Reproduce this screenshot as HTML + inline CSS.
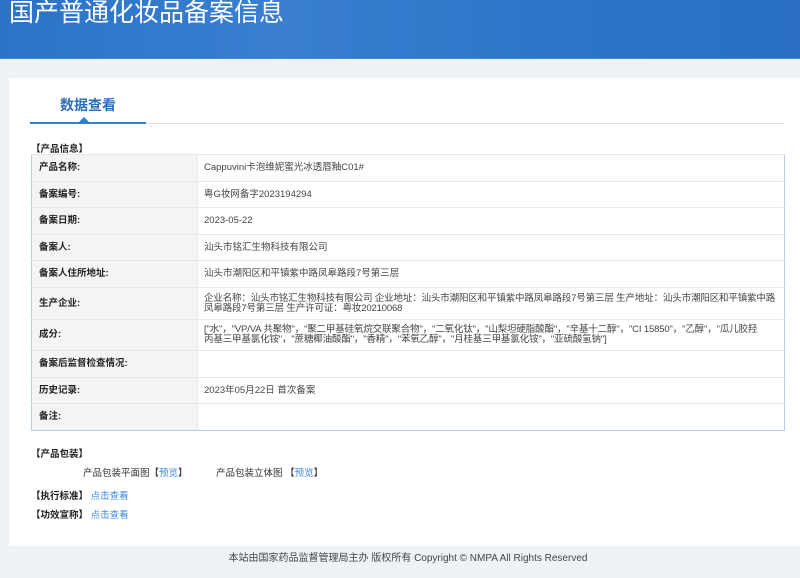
<!DOCTYPE html>
<html><head><meta charset="utf-8"><style>
*{margin:0;padding:0;box-sizing:border-box}
body{width:800px;height:578px;overflow:hidden;background:#eff2f5;font-family:"Liberation Sans","Noto Sans CJK SC",sans-serif;font-size:10px;color:#333;position:relative}
.hd{position:absolute;left:0;top:0;width:800px;height:59px;background:linear-gradient(90deg,#2b73c8 0%,#3a7fd0 35%,#2c74c6 70%,#2a6fc2 100%);border-bottom:1px solid #3b8ad8}
.hd h1{position:absolute;left:9px;top:-7px;font-size:25px;font-weight:normal;color:#fff;letter-spacing:0}
.panel{position:absolute;left:9px;top:78px;width:791px;height:468px;background:#fff}
.tab{position:absolute;left:60px;top:95px;font-size:14px;font-weight:bold;color:#2f6db5}
.line{position:absolute;left:30px;top:123px;width:755px;height:1px;background:#e2e2e2}
.line2{position:absolute;left:30px;top:122px;width:116px;height:2px;background:#2f80d0}
.tri{position:absolute;left:79px;top:117px;width:0;height:0;border-left:5px solid transparent;border-right:5px solid transparent;border-bottom:5px solid #2f80d0}
.b{font-weight:bold;color:#222}
.abs{position:absolute}
table{position:absolute;left:31px;top:154px;width:754px;border-collapse:collapse;border:1px solid #b9cbe6;table-layout:fixed}
td{border-top:1px solid #e8e8e8;vertical-align:middle;font-size:9.5px;line-height:10px}
td.l{width:166px;background:#f4f4f4;font-weight:bold;color:#222;padding-left:7px;border-right:1px solid #e8e8e8}
td.v{padding-left:6px;color:#444;overflow:hidden}
.nw{white-space:nowrap;letter-spacing:-0.15px}
a{color:#3d8be0;text-decoration:none}
.ft{position:absolute;left:0;width:816px;top:549px;text-align:center;font-size:10px;color:#444}
</style></head><body>
<div class="hd"><h1>国产普通化妆品备案信息</h1></div>
<div class="panel"></div>
<div class="tab">数据查看</div>
<div class="line"></div><div class="line2"></div><div class="tri"></div>
<div class="abs b" style="left:31px;top:141px;font-size:9.5px">【产品信息】</div>
<table>
<tr style="height:27px"><td class="l">产品名称:</td><td class="v">Cappuvini卡泡维妮蜜光冰透唇釉C01#</td></tr>
<tr style="height:26px"><td class="l">备案编号:</td><td class="v">粤G妆网备字2023194294</td></tr>
<tr style="height:27px"><td class="l">备案日期:</td><td class="v">2023-05-22</td></tr>
<tr style="height:26px"><td class="l">备案人:</td><td class="v">汕头市铭汇生物科技有限公司</td></tr>
<tr style="height:27px"><td class="l">备案人住所地址:</td><td class="v">汕头市潮阳区和平镇紫中路凤皋路段7号第三层</td></tr>
<tr style="height:32px"><td class="l">生产企业:</td><td class="v"><div class="nw">企业名称：汕头市铭汇生物科技有限公司 企业地址：汕头市潮阳区和平镇紫中路凤皋路段7号第三层 生产地址：汕头市潮阳区和平镇紫中路</div><div class="nw">凤皋路段7号第三层 生产许可证：粤妆20210068</div></td></tr>
<tr style="height:31px"><td class="l">成分:</td><td class="v"><div class="nw">["水"，"VP/VA 共聚物"，"聚二甲基硅氧烷交联聚合物"，"二氧化钛"，"山梨坦硬脂酸酯"，"辛基十二醇"，"CI 15850"，"乙醇"，"瓜儿胶羟</div><div class="nw">丙基三甲基氯化铵"，"蔗糖椰油酸酯"，"香精"，"苯氧乙醇"，"月桂基三甲基氯化铵"，"亚硫酸氢钠"]</div></td></tr>
<tr style="height:27px"><td class="l">备案后监督检查情况:</td><td class="v"></td></tr>
<tr style="height:26px"><td class="l">历史记录:</td><td class="v">2023年05月22日 首次备案</td></tr>
<tr style="height:27px"><td class="l">备注:</td><td class="v"></td></tr>
</table>
<div class="abs b" style="left:31px;top:446px;font-size:9.5px">【产品包装】</div>
<div class="abs" style="left:83px;top:465px;font-size:9.5px">产品包装平面图【<a>预览</a>】</div>
<div class="abs" style="left:216px;top:465px;font-size:9.5px">产品包装立体图 【<a>预览</a>】</div>
<div class="abs" style="left:31px;top:488px;font-size:9.5px"><span class="b">【执行标准】</span> <a>点击查看</a></div>
<div class="abs" style="left:31px;top:507px;font-size:9.5px"><span class="b">【功效宣称】</span> <a>点击查看</a></div>
<div class="ft">本站由国家药品监督管理局主办 版权所有 Copyright © NMPA All Rights Reserved</div>
</body></html>
